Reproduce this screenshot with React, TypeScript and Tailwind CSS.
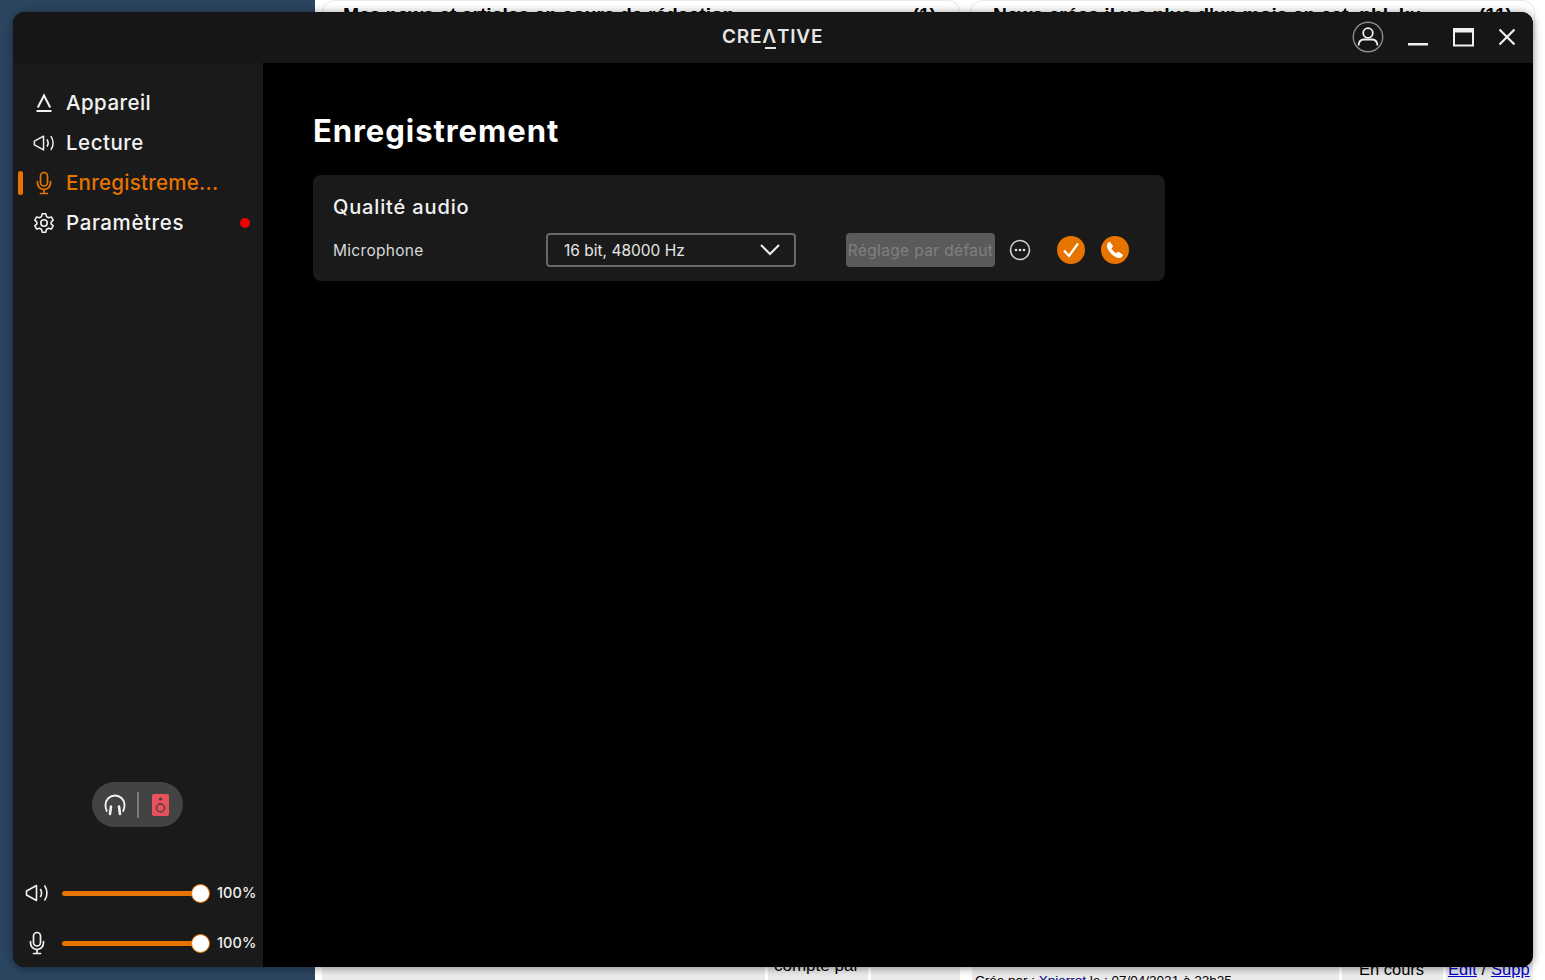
import React from "react";

const font = { fontFamily: '"Inter", "Noto Sans", sans-serif' };

function DeviceIcon() {
  return (
    <svg width="18" height="20" viewBox="0 0 18 20" fill="none" stroke="currentColor" strokeWidth="2">
      <path d="M2.800 14.500 9 2.500l6.200 12" strokeLinejoin="miter" />
      <path d="M1.500 18h15" />
    </svg>
  );
}
function SpeakerIcon() {
  return (
    <svg width="24" height="20" viewBox="0 0 24 20" fill="none" stroke="currentColor" strokeWidth="1.600" strokeLinecap="round" strokeLinejoin="round">
      <path d="M1.500 8v4l10 5.500V2.500z" />
      <path d="M15.500 6.500c1.300 2.200 1.300 5 0 7" />
      <path d="M19.800 3c2.800 4 2.800 10 0 14" />
    </svg>
  );
}
function MicIcon() {
  return (
    <svg width="18" height="24" viewBox="0 0 18 24" fill="none" stroke="currentColor" strokeWidth="1.700" strokeLinecap="round">
      <rect x="5.500" y="1.500" width="7" height="13.500" rx="3.500" />
      <path d="M2.500 10.500v1.500a6.500 6.500 0 0 0 13 0v-1.500" />
      <path d="M9 18.500v3.500M5.500 22.500h7" />
    </svg>
  );
}
function GearIcon() {
  return (
    <svg width="22" height="22" viewBox="0 0 24 24" fill="none" stroke="currentColor" strokeWidth="1.700" strokeLinejoin="round">
      <path d="M10 2h4l.7 3 2.300 1.300 3-.9 2 3.500-2.200 2.100v2l2.200 2.100-2 3.500-3-.9-2.300 1.300-.7 3h-4l-.7-3L7 17.700l-3 .9-2-3.500L4.200 13v-2L2 8.900l2-3.500 3 .9L9.300 5z" />
      <circle cx="12" cy="12" r="3.500" />
    </svg>
  );
}
function HeadphoneIcon() {
  return (
    <svg width="22" height="22" viewBox="0 0 22 22" fill="none" stroke="#f2f2f2" strokeWidth="1.900" strokeLinecap="round">
      <path d="M2.800 17c-1-2-1.300-4-1.300-6a9.500 9.500 0 0 1 19 0c0 2-.3 4-1.300 6" />
      <path d="M7 12.500l-1 7.500M15 12.500l1 7.500" strokeWidth="2.600" />
    </svg>
  );
}
function RedSpeaker() {
  return (
    <svg width="17" height="22" viewBox="0 0 17 22">
      <rect width="17" height="22" rx="2" fill="#e8505b" />
      <circle cx="8.500" cy="5" r="1.600" fill="#3f3f3f" />
      <circle cx="8.500" cy="14" r="4" fill="none" stroke="#3f3f3f" strokeWidth="1.300" />
    </svg>
  );
}

function NavItem({ icon, label, active, dot, spacing }: { icon: React.ReactNode; label: string; active?: boolean; dot?: boolean; spacing: string }) {
  return (
    <div className={`relative flex h-10 items-center pl-[20px] pr-[13px] ${active ? "text-[#e87400]" : "text-[#f2f2f2]"}`}>
      {active && <div className="absolute left-[5px] top-[8px] h-[24px] w-[5px] rounded-full bg-[#e87400]" />}
      <div className="flex w-[22px] justify-center">{icon}</div>
      <span className={`ml-[11px] flex-1 text-[20.500px] font-medium ${spacing}`}>{label}</span>
      {dot && <div className="h-[10px] w-[10px] rounded-full bg-[#f00000]" />}
    </div>
  );
}

function Slider({ icon }: { icon: React.ReactNode }) {
  return (
    <div className="flex h-[50px] items-center pl-[12px] pt-[2px]">
      <div className="flex w-[24px] justify-center text-[#f2f2f2]">{icon}</div>
      <div className="relative ml-[13px] h-[5px] w-[138px] rounded-full bg-[#e87400]">
        <div className="absolute right-[-10px] top-[-7px] h-[19px] w-[19px] rounded-full border border-[#e87400] bg-white" />
      </div>
      <span className="ml-[17px] text-[14.500px] font-medium tracking-[0.1px] text-[#f0f0f0]">100%</span>
    </div>
  );
}

export default function App() {
  return (
    <div className="relative flex h-[980px] w-[1545px] overflow-hidden bg-white">
      {/* desktop and page behind the window */}
      <div className="w-[315px] shrink-0 bg-[#2b4560]" />
      <div className="flex flex-1 flex-col justify-between bg-white text-black" style={{ fontFamily: '"Liberation Sans", sans-serif' }}>
        <div className="flex gap-[10px] pl-[7px] pr-[10px]">
          <div className="flex h-[40px] w-[638px] justify-between rounded-t-[12px] border border-[#e8e8e8] pl-[20px] pr-[21px] pt-[4px] text-[19.250px] font-bold leading-none">
            <span>Mes news et articles en cours de rédaction</span>
            <span className="mr-[2px]">(1)</span>
          </div>
          <div className="flex h-[40px] flex-1 justify-between rounded-t-[12px] border border-[#e8e8e8] pl-[22px] pr-[20px] pt-[4px] text-[19.250px] font-bold leading-none">
            <span>News crées il y a plus d'un mois en cat. pbl. ku</span>
            <span className="mr-[2px]">(11)</span>
          </div>
        </div>
        <div className="flex h-[40px] gap-[3px] pl-[7px] text-[17px] leading-none">
          <div className="w-[443px] bg-[#ebebeb]" />
          <div className="w-[100px] bg-[#ebebeb] pl-[6px] pt-[17px]">compte par</div>
          <div className="mr-[9px] w-[89px] bg-[#ebebeb]" />
          <div className="w-[367px] overflow-hidden bg-[#ebebeb] pl-[3px] pt-[34px] text-[13.500px]">
            Crée par : <span className="text-[#000080]">Xpierrot</span> le : 07/04/2021 à 22h25
          </div>
          <div className="w-[101px] bg-[#ebebeb] pl-[17px] pt-[21px] text-[16.500px]">En cours</div>
          <div className="w-[87px] bg-[#ebebeb] pl-[2px] pt-[21px] text-[16.500px] tracking-[0.1px]">
            <span className="text-[#0000cc] underline">Edit</span>{" "}/{" "}<span className="text-[#0000cc] underline">Supp</span>
          </div>
        </div>
      </div>

      {/* application window */}
      <div className="absolute left-[13px] top-[12px] flex h-[955px] w-[1520px] flex-col overflow-hidden rounded-[12px] bg-black shadow-[0_1px_9px_rgba(0,0,0,0.45)]" style={font}>
        <header className="relative flex h-[51px] shrink-0 items-center justify-end bg-[#161616] pr-[17px]">
          <div className="absolute left-[709px] top-[12px] flex items-start text-[19px] font-semibold leading-[25px] tracking-[0.8px] text-[#e6e6e6]">
            <span>CRE</span>
            <span className="relative">
              Λ
              <span className="absolute bottom-[0px] left-[3px] h-[2px] w-[11px] bg-[#e6e6e6]" />
            </span>
            <span>TIVE</span>
          </div>
          <svg width="32" height="32" viewBox="0 0 32 32" fill="none" className="mr-[24px] mb-[1px]">
            <circle cx="16" cy="16" r="14.700" stroke="#8a8a8a" strokeWidth="1.400" />
            <circle cx="16" cy="12" r="4.800" stroke="#f0f0f0" strokeWidth="1.800" />
            <path d="M6.500 24.500c.3-4 2.500-6 5.500-6h8c3 0 5.200 2 5.500 6" stroke="#f0f0f0" strokeWidth="1.800" />
          </svg>
          <svg width="20" height="20" viewBox="0 0 20 20" className="mr-[25px] mb-[1px]">
            <rect x="0" y="16" width="20" height="2.500" fill="#f0f0f0" />
          </svg>
          <svg width="21" height="19" viewBox="0 0 21 19" fill="none" className="mr-[24px] mb-[1px]">
            <rect x="1" y="1" width="19" height="16.500" stroke="#f0f0f0" strokeWidth="2" />
            <rect x="1" y="1" width="19" height="3.500" fill="#f0f0f0" />
          </svg>
          <svg width="18" height="18" viewBox="0 0 18 18" fill="none" stroke="#f0f0f0" strokeWidth="2.200" className="mb-[1px]">
            <path d="M1.500 1.500l15 15M16.500 1.500l-15 15" />
          </svg>
        </header>

        <div className="flex min-h-0 flex-1">
          <aside className="flex w-[250px] shrink-0 flex-col bg-[#1a1a1a] pt-[20px]">
            <NavItem icon={<DeviceIcon />} label="Appareil" spacing="tracking-[0.45px]" />
            <NavItem icon={<SpeakerIcon />} label="Lecture" spacing="tracking-[0.5px]" />
            <NavItem icon={<MicIcon />} label="Enregistreme..." active spacing="tracking-[0.25px]" />
            <NavItem icon={<GearIcon />} label="Paramètres" dot spacing="tracking-[0.6px]" />
            <div className="mt-auto flex justify-center pb-[40px] pr-[1px]">
              <div className="flex h-[45px] w-[91px] items-center rounded-full bg-[#434343] pl-[12px]">
                <HeadphoneIcon />
                <div className="ml-[11px] h-[26px] w-[2px] bg-[#7a7a7a]" />
                <div className="ml-[13px]"><RedSpeaker /></div>
              </div>
            </div>
            <div>
              <Slider icon={<SpeakerIcon />} />
              <Slider icon={<MicIcon />} />
            </div>
          </aside>

          <main className="flex-1 bg-black pl-[50px] pt-[46px]">
            <h1 className="text-[31px] font-bold leading-[44px] tracking-[0.95px] text-white">Enregistrement</h1>
            <section className="mt-[22px] h-[106px] w-[852px] rounded-[8px] bg-[#1a1a1a] pl-[20px] pt-[18px]">
              <h2 className="text-[20px] font-medium leading-[28px] tracking-[0.85px] text-[#f2f2f2]">Qualité audio</h2>
              <div className="mt-[12px] flex items-center">
                <span className="w-[213px] pt-[1px] text-[15.500px] font-normal tracking-[0.3px] text-[#d9d9d9]">Microphone</span>
                <div className="flex h-[34px] w-[250px] items-center justify-between rounded-[4px] border-2 border-[#686868] pl-[16px] pr-[14px] text-[15.500px] text-[#e6e6e6]">
                  <span className="pt-[1px]">16 bit, 48000 Hz</span>
                  <svg width="20" height="12" viewBox="0 0 20 12" fill="none" stroke="#f0f0f0" strokeWidth="2">
                    <path d="M1 1l9 9 9-9" />
                  </svg>
                </div>
                <button className="ml-[50px] flex h-[34px] w-[149px] items-center justify-center rounded-[4px] bg-[#5a5a5a] pt-[1px] text-[15.500px] tracking-[0.35px] text-[#808080]">
                  Réglage par défaut
                </button>
                <svg width="22" height="22" viewBox="0 0 22 22" fill="none" className="ml-[14px]">
                  <circle cx="11" cy="11" r="9.500" stroke="#d0d0d0" strokeWidth="1.600" />
                  <circle cx="7" cy="11" r="1.300" fill="#e6e6e6" />
                  <circle cx="11" cy="11" r="1.300" fill="#e6e6e6" />
                  <circle cx="15" cy="11" r="1.300" fill="#e6e6e6" />
                </svg>
                <div className="ml-[26px] flex h-[28px] w-[28px] items-center justify-center rounded-full bg-[#e87400]">
                  <svg width="18" height="16" viewBox="0 0 18 16" fill="none" stroke="#ffffff" strokeWidth="2.200">
                    <path d="M2 8.500l5 5.500L16 1.500" />
                  </svg>
                </div>
                <div className="ml-[16px] flex h-[28px] w-[28px] items-center justify-center rounded-full bg-[#e87400]">
                  <svg width="18" height="18" viewBox="0 0 18 18" fill="#ffffff">
                    <path d="M4.200 1.200 6.800 4.800c.3.400.2.900-.1 1.200L5.500 7.300c.8 2 2.600 3.900 4.900 5l1.300-1.200c.3-.3.800-.4 1.200-.1l3.600 2.600c.4.300.5.800.2 1.200-.9 1.500-2.400 2.600-4.200 2.200C7.300 15.900 2.500 11 1 5.800.6 4 1.600 2.300 3 1.100c.4-.3.900-.3 1.200.1z" />
                  </svg>
                </div>
              </div>
            </section>
          </main>
        </div>
      </div>
    </div>
  );
}
